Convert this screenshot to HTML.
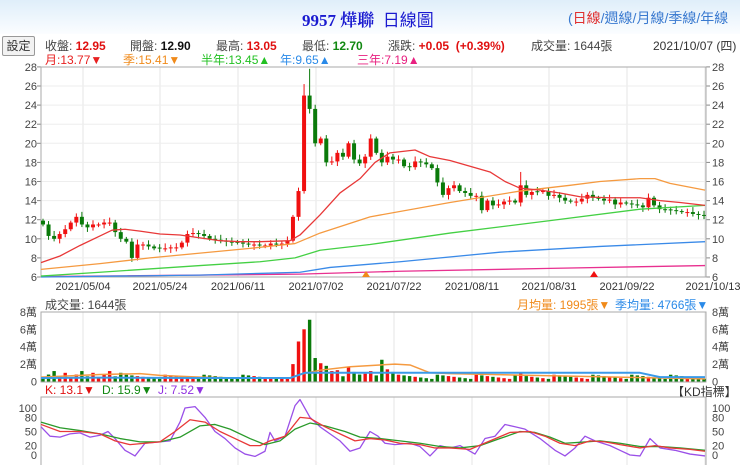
<!DOCTYPE html>
<html><head><meta charset="utf-8">
<style>
body{margin:0;width:740px;height:465px;overflow:hidden;background:#fff;font-family:"Liberation Sans","Noto Sans CJK TC",sans-serif;position:relative}
.hd{position:absolute;left:0;top:0;width:740px;height:34px;background:linear-gradient(#dfeefa,#fbfdff)}
.t{position:absolute;white-space:nowrap}
.btn{position:absolute;left:2px;top:36px;width:31px;height:18px;border:1px solid #999;border-radius:2px;background:#f2f2f2;font-size:12px;line-height:18px;text-align:center;color:#333}
svg{position:absolute;left:0;top:0}
</style></head><body>
<div class="hd"></div>
<div class="t" style="left:302px;top:6px;font-family:'Liberation Serif','Noto Serif CJK SC',serif;font-size:17px;font-weight:bold;color:#1a1ad0">9957 燁聯&nbsp; <span style="font-family:'Liberation Sans','Noto Sans CJK TC',sans-serif;font-weight:normal">日線圖</span></div>
<div class="t" style="left:568px;top:8px;font-size:14px;color:#3a7ad0">(<span style="color:#e03030">日線</span>/週線/月線/季線/年線</div>
<div class="btn">設定</div>
<div class="t" style="left:45px;top:37px;font-size:12px;color:#444">收盤: <b style="color:#e01010">12.95</b></div>
<div class="t" style="left:130px;top:37px;font-size:12px;color:#444">開盤: <b style="color:#111">12.90</b></div>
<div class="t" style="left:216px;top:37px;font-size:12px;color:#444">最高: <b style="color:#e01010">13.05</b></div>
<div class="t" style="left:302px;top:37px;font-size:12px;color:#444">最低: <b style="color:#118811">12.70</b></div>
<div class="t" style="left:388px;top:37px;font-size:12px;color:#444">漲跌: <b style="color:#e01010">+0.05 &nbsp;(+0.39%)</b></div>
<div class="t" style="left:531px;top:37px;font-size:12px;color:#444">成交量: 1644張</div>
<div class="t" style="left:653px;top:37px;font-size:12px;color:#333">2021/10/07 (四)</div>
<div class="t" style="left:45px;top:51px;font-size:12px;color:#e82020">月:13.77▼</div>
<div class="t" style="left:123px;top:51px;font-size:12px;color:#f08a1a">季:15.41▼</div>
<div class="t" style="left:201px;top:51px;font-size:12px;color:#22c022">半年:13.45▲</div>
<div class="t" style="left:280px;top:51px;font-size:12px;color:#2a8ae8">年:9.65▲</div>
<div class="t" style="left:357px;top:51px;font-size:12px;color:#e82080">三年:7.19▲</div>
<div class="t" style="left:45px;top:296px;font-size:12px;color:#444">成交量: 1644張</div>
<div class="t" style="left:517px;top:296px;font-size:12px;color:#f08a1a">月均量: 1995張▼</div>
<div class="t" style="left:615px;top:296px;font-size:12px;color:#2a8ae8">季均量: 4766張▼</div>
<div class="t" style="left:45px;top:383px;font-size:12px;color:#e01010">K: 13.1▼</div>
<div class="t" style="left:102px;top:383px;font-size:12px;color:#118811">D: 15.9▼</div>
<div class="t" style="left:158px;top:383px;font-size:12px;color:#9030e0">J: 7.52▼</div>
<div class="t" style="left:672px;top:383px;font-size:12px;color:#333">【KD指標】</div>
<svg id="s" width="740" height="465" font-family="Liberation Sans, Noto Sans CJK TC, sans-serif" font-size="11" fill="#444"></svg>
<script>
var S=document.getElementById('s'),h='';
function py(p){return 277-(p-6)*9.55}
function vy(v){return 381.5-v*8.7}
function ky(v){return 455-v*0.47}
var L=41,R=706;
var gx=[83,160,238,316,394,472,549,627,705];
gx.forEach(function(x){h+='<line x1="'+x+'" y1="67" x2="'+x+'" y2="277" stroke="#e4e4e4"/><line x1="'+x+'" y1="312" x2="'+x+'" y2="381" stroke="#e4e4e4"/><line x1="'+x+'" y1="397" x2="'+x+'" y2="465" stroke="#e4e4e4"/>'});
for(var p=6;p<=28;p+=2){var y=py(p);if(p>6&&p<28)h+='<line x1="'+L+'" y1="'+y+'" x2="'+R+'" y2="'+y+'" stroke="#eee"/>';
h+='<text x="37" y="'+(y+4)+'" text-anchor="end">'+p+'</text><text x="712" y="'+(y+4)+'">'+p+'</text><line x1="37" y1="'+y+'" x2="41" y2="'+y+'" stroke="#888"/><line x1="706" y1="'+y+'" x2="710" y2="'+y+'" stroke="#888"/>'}
h+='<rect x="41" y="67" width="665" height="210" fill="none" stroke="#aaa"/>';
var ds=['2021/05/04','2021/05/24','2021/06/11','2021/07/02','2021/07/22','2021/08/11','2021/08/31','2021/09/22','2021/10/13'];
ds.forEach(function(d,i){h+='<text x="'+(gx[i]+(i==8?8:0))+'" y="290" text-anchor="middle" fill="#333">'+d+'</text>'});
[0,2,4,6,8].forEach(function(v){var y=vy(v);var t=v?v+'萬':'0';h+='<text x="37" y="'+(y+4)+'" text-anchor="end">'+t+'</text><text x="712" y="'+(y+4)+'">'+t+'</text>'});
h+='<rect x="41" y="312" width="665" height="70" fill="none" stroke="#aaa"/>';
[100,80,50,20,0].forEach(function(v){var y=ky(v);h+='<text x="37" y="'+(y+4)+'" text-anchor="end">'+v+'</text><text x="712" y="'+(y+4)+'">'+v+'</text>'});
h+='<rect x="41" y="397" width="665" height="70" fill="none" stroke="#aaa"/>';
var c=[11.5,10.3,10,10.5,11,11.7,12.3,11.5,11.2,11.5,11.5,11.7,11.7,10.7,10,9.7,8,9.4,9.4,9.2,9,9,9,9.1,9.1,9.6,10.5,10.6,10.5,10.3,10,9.9,9.8,9.7,9.6,9.6,9.5,9.4,9.4,9.3,9.3,9.5,9.4,9.5,9.8,12.3,15,25,23.6,20,20.5,18,18.1,19,18.6,20,18.3,17.9,18.6,20.5,19,18,18.6,18.3,18.3,17.6,17.5,18.1,18,17.8,17.4,15.9,14.6,15.3,15.6,15,14.8,14.5,14.5,13,14,13.5,13.6,13.9,14,13.8,15.6,14.6,14.9,14.9,15,14.5,14.6,14.3,14,13.9,13.9,14.2,14.6,14.3,14.2,14,14.1,13.6,13.8,13.7,13.6,13.5,13.3,14.3,13.5,13.1,13,13,12.9,12.8,12.8,12.6,12.5,12.4];
var n=c.length,dx=(704-43)/(n-1);
for(var i=0;i<n;i++){var x=43+i*dx,cl=c[i],op=i?c[i-1]:11.9;
if(Math.abs(cl-op)<0.08)op=cl+(i%2?0.08:-0.08);
var up=cl>op,col=up?'#f01010':'#0a7a0a';
var hi=Math.max(op,cl)+0.2+((i*37)%5)*0.08,lo=Math.min(op,cl)-0.2-((i*23)%5)*0.07;
if(i==48)hi=27.8;if(i==47)hi=26.2;if(i==86)hi=17;
h+='<line x1="'+x+'" y1="'+py(hi)+'" x2="'+x+'" y2="'+py(lo)+'" stroke="'+col+'"/>';
var y1=py(Math.max(op,cl)),y2=py(Math.min(op,cl));
h+='<rect x="'+(x-2)+'" y="'+y1+'" width="4" height="'+Math.max(1,y2-y1)+'" fill="'+col+'"/>';
var v=0.3+((i*13)%7)*0.08;if(i<15)v=0.4+((i*7)%5)*0.2;if(i>42&&i<62)v=[0.5,0.5,2,4.6,6,7.1,2.7,2.1,1.8,1.2,1.3,0.6,1.7,1.1,0.8,0.9,1.2,0.7,0.6][i-43]||0.8;if(i==61)v=2.5;if(i==62)v=1.4;if(i==63)v=1.1;if(i==86)v=1;
h+='<rect x="'+(x-1.7)+'" y="'+vy(v)+'" width="3.4" height="'+(vy(0)-vy(v))+'" fill="'+col+'"/>';}
function line(pts,f,col,w){var s='';for(var i=0;i<pts.length;i+=2)s+=(i?'L':'M')+pts[i]+' '+f(pts[i+1]);h+='<path d="'+s+'" fill="none" stroke="'+col+'" stroke-width="'+(w||1.3)+'" stroke-linejoin="round"/>'}
line([41,6.05,300,6.3,400,6.6,550,6.9,705,7.2],py,'#e83090');
line([41,6,200,6.2,300,6.5,330,7,400,7.6,500,8.6,600,9.2,705,9.7],py,'#3a8ae8');
line([41,6.1,100,6.5,200,7.2,260,7.6,295,8,320,8.8,370,9.4,450,10.6,550,11.9,640,13.1,705,13.5],py,'#44d044');
line([41,6.8,100,7.4,150,8,200,8.5,250,9,295,9.5,320,10.6,370,12.3,450,13.8,520,15,570,15.6,600,16,640,16.3,655,16.3,670,15.8,705,15.1],py,'#f59a40');
line([41,7.5,60,8.2,80,9.3,100,10.3,112,10.9,125,11,140,10.8,160,10.5,180,10.4,200,10.1,220,9.8,240,9.7,260,9.7,290,9.8,300,10.4,320,12.5,340,14.8,360,16.3,375,18,390,19,415,19.3,430,18.6,450,18.2,470,17.6,490,17,505,16,520,15.3,540,15.1,560,14.8,580,14.4,610,14.3,640,14.3,660,14,680,13.8,705,13.5],py,'#e83838');
h+='<path d="M362 277l4-6 4 6z" fill="#f08a1a"/><path d="M590 277l4-6 4 6z" fill="#f01010"/>';
line([41,0.5,100,0.8,140,0.9,160,0.7,200,0.5,240,0.4,290,0.4,300,0.8,320,1.3,350,1.7,395,2,410,1.9,430,1,450,0.9,705,0.3],vy,'#f59a40',1.5);
line([41,0.4,100,0.45,200,0.4,290,0.4,305,1,320,1,395,1,430,1,640,1,660,0.5,705,0.5],vy,'#3a9ae8',2);
line([41,60,50,40,60,38,70,45,80,47,90,38,100,42,108,50,115,35,125,10,135,-2,145,25,160,28,170,30,180,70,185,100,195,103,205,80,215,50,225,35,235,15,245,2,255,-3,265,8,270,48,275,30,285,40,295,105,300,118,310,80,320,60,330,45,340,30,350,8,360,15,370,50,378,40,385,25,395,22,410,25,420,18,430,-2,440,20,450,15,460,20,475,2,485,35,495,40,505,65,515,60,525,55,540,35,555,10,565,-2,575,15,585,40,595,30,610,20,620,10,630,0,640,-2,650,35,660,15,675,10,690,2,705,-2],ky,'#9a50e8');
line([41,70,60,58,80,52,100,45,120,35,140,28,160,28,180,38,200,62,215,65,230,55,250,35,265,22,280,30,295,55,310,68,325,62,345,50,360,38,380,35,400,30,420,25,440,18,460,15,480,20,500,35,520,50,535,48,550,38,565,25,580,27,600,30,620,25,640,18,660,18,680,15,705,10],ky,'#2a9a2a');
line([41,65,60,50,80,50,100,45,115,30,130,22,145,25,160,28,175,50,190,75,205,70,220,50,235,35,250,20,260,20,270,30,285,40,300,80,310,78,325,60,340,45,355,30,370,35,385,32,400,25,420,22,435,15,450,15,470,12,490,30,510,48,530,50,545,40,560,25,575,20,590,30,605,28,620,22,640,15,655,20,670,15,690,12,705,8],ky,'#e83838');
S.innerHTML=h;
</script>
</body></html>
